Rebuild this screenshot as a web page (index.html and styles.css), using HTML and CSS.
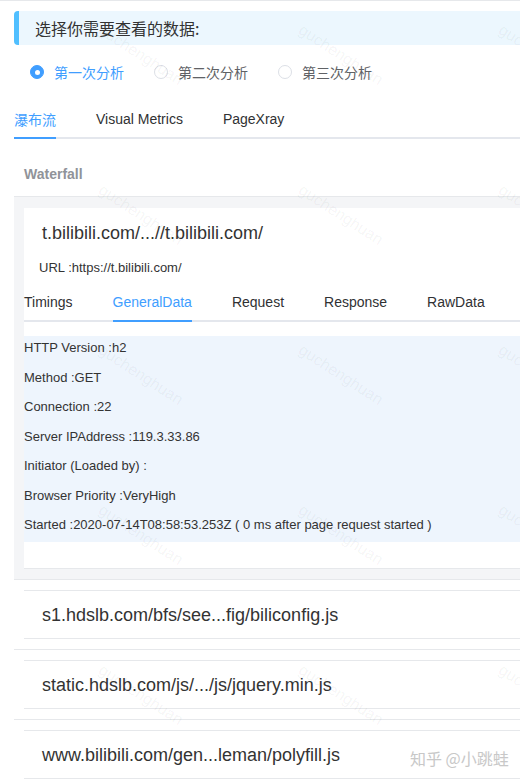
FILE: index.html
```html
<!DOCTYPE html>
<html lang="zh">
<head>
<meta charset="utf-8">
<title>Waterfall</title>
<link rel="stylesheet" href="styles.css">
</head>
<body>
<div class="page">
  <div class="tip">选择你需要查看的数据:</div>
  <div class="radios">
    <label class="radio checked"><span class="dot"></span><span class="rlabel">第一次分析</span></label>
    <label class="radio"><span class="dot"></span><span class="rlabel">第二次分析</span></label>
    <label class="radio"><span class="dot"></span><span class="rlabel">第三次分析</span></label>
  </div>
  <div class="tabs">
    <div class="tab active"><span class="cjk">瀑布流</span></div>
    <div class="tab"><span>Visual Metrics</span></div>
    <div class="tab"><span>PageXray</span></div>
  </div>
  <div class="wf-title">Waterfall</div>
  <div class="list">
    <div class="item open">
      <div class="card card-open">
        <div class="card-title">t.bilibili.com/...//t.bilibili.com/</div>
        <div class="url">URL :https://t.bilibili.com/</div>
        <div class="tabs subtabs">
          <div class="tab"><span>Timings</span></div>
          <div class="tab active"><span>GeneralData</span></div>
          <div class="tab"><span>Request</span></div>
          <div class="tab"><span>Response</span></div>
          <div class="tab"><span>RawData</span></div>
        </div>
        <div class="panel">
          <div class="row">HTTP Version :h2</div>
          <div class="row">Method :GET</div>
          <div class="row">Connection :22</div>
          <div class="row">Server IPAddress :119.3.33.86</div>
          <div class="row">Initiator (Loaded by) :</div>
          <div class="row">Browser Priority :VeryHigh</div>
          <div class="row">Started :2020-07-14T08:58:53.253Z ( 0 ms after page request started )</div>
        </div>
        <div class="card-foot"></div>
      </div>
    </div>
    <div class="item">
      <div class="card card-line">s1.hdslb.com/bfs/see...fig/biliconfig.js</div>
    </div>
    <div class="item">
      <div class="card card-line">static.hdslb.com/js/.../js/jquery.min.js</div>
    </div>
    <div class="item">
      <div class="card card-line">www.bilibili.com/gen...leman/polyfill.js</div>
    </div>
  </div>
</div>
<div class="wm">
  <span>guchenghuan</span><span>guchenghuan</span><span>guchenghuan</span>
  <span>guchenghuan</span><span>guchenghuan</span><span>guchenghuan</span>
  <span>guchenghuan</span><span>guchenghuan</span><span>guchenghuan</span>
  <span>guchenghuan</span><span>guchenghuan</span><span>guchenghuan</span>
  <span>guchenghuan</span><span>guchenghuan</span><span>guchenghuan</span>
</div>
<div class="zhihu">知乎 @小跳蛙</div>
</body>
</html>
```

FILE: styles.css
```css
html, body {
  margin: 0;
  padding: 0;
  overflow: hidden;
}
body {
  position: relative;
  width: 520px;
  height: 784px;
  border-top: 1px solid #e6e8eb;
  box-sizing: border-box;
  background: #fff;
  font-family: "Liberation Sans", Arial, "Noto Sans CJK SC", sans-serif;
  color: #333;
}
.page {
  width: 600px;
  padding-left: 14px;
}
.cjk, .tip, .rlabel, .zhihu {
  font-family: "Noto Sans CJK SC", "Liberation Sans", sans-serif;
}
.tip {
  margin-top: 10px;
  height: 34px;
  line-height: 34px;
  background: #ecf7fe;
  border-left: 5px solid #50bfff;
  border-radius: 4px;
  padding-left: 16px;
  font-size: 16px;
  color: #333;
}
.radios {
  display: flex;
  align-items: center;
  height: 18px;
  margin-top: 18px;
  padding-left: 16px;
}
.radio {
  display: flex;
  align-items: center;
  margin-right: 30px;
}
.dot {
  width: 12px;
  height: 12px;
  border: 1px solid #dcdfe6;
  border-radius: 50%;
  background: #fff;
  display: flex;
  align-items: center;
  justify-content: center;
  margin-right: 10px;
}
.radio.checked .dot {
  background: #409eff;
  border-color: #409eff;
}
.radio.checked .dot::after {
  content: "";
  width: 5px;
  height: 5px;
  border-radius: 50%;
  background: #fff;
}
.rlabel {
  font-size: 14px;
  line-height: 17px;
  color: #606266;
}
.radio.checked .rlabel {
  color: #409eff;
}
.tabs {
  display: flex;
  margin-top: 18px;
  border-bottom: 2px solid #e4e7ed;
}
.tab {
  padding: 0 20px;
}
.tab:first-child {
  padding-left: 0;
}
.tab span {
  display: block;
  height: 38px;
  line-height: 40px;
  font-size: 14px;
  color: #303133;
}
.tab.active span {
  color: #409eff;
  border-bottom: 2px solid #409eff;
  margin-bottom: -2px;
}
.wf-title {
  margin-top: 25px;
  margin-bottom: 12px;
  padding-left: 10px;
  line-height: 20px;
  font-size: 14px;
  font-weight: bold;
  color: #909399;
}
.item {
  padding: 10px 0 10px 10px;
  border-bottom: 1px solid #e6e8eb;
}
.item.open {
  border-top: 1px solid #e6e8eb;
  padding-top: 11px;
  background: #f4f5f7;
}
.card {
  background: #fff;
}
.card-open {
  border-bottom: 1px solid #e6e8eb;
}
.card-title {
  padding: 13px 0 0 18px;
  font-size: 18px;
  line-height: 24px;
  color: #333;
}
.url {
  margin-top: 14px;
  padding-left: 15px;
  font-size: 13px;
  line-height: 18px;
  color: #333;
}
.subtabs {
  margin-top: 5px;
}
.panel {
  margin-top: 14px;
  padding: 3px 0 8px 0;
  background: #eef5fd;
  display: flex;
  flex-direction: column;
  gap: 11.5px;
}
.row {
  font-size: 13px;
  line-height: 18px;
  color: #333;
}
.card-foot {
  height: 26px;
}
.card-line {
  border-top: 1px solid #e6e8eb;
  border-bottom: 1px solid #e6e8eb;
  height: 47px;
  line-height: 48px;
  padding-left: 18px;
  font-size: 18px;
  color: #333;
}
.wm {
  position: absolute;
  left: 105px;
  top: 20px;
  display: grid;
  grid-template-columns: repeat(3, 200px);
  grid-auto-rows: 160px;
  pointer-events: none;
}
.wm span {
  display: block;
  transform-origin: left top;
  transform: rotate(33deg);
  font-size: 16px;
  color: rgba(0, 0, 0, 0.05);
  white-space: nowrap;
}
.zhihu {
  position: absolute;
  left: 410px;
  top: 746px;
  font-size: 16px;
  line-height: 22px;
  color: #c8c8c8;
  pointer-events: none;
}
```
